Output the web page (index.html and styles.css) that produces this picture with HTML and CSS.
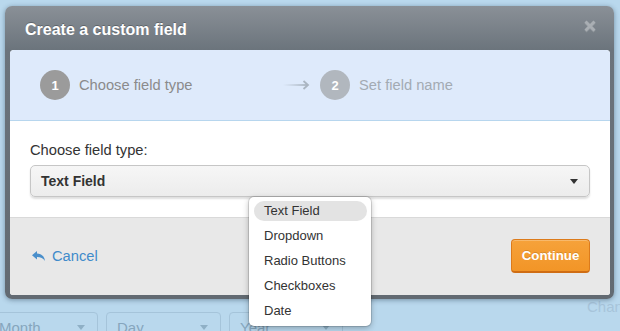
FILE: index.html
```html
<!DOCTYPE html>
<html>
<head>
<meta charset="utf-8">
<link rel="stylesheet" href="styles.css">
</head>
<body>
<div class="bg">
  <div class="bg-chan">Chan</div>
  <div class="bg-row">
    <div class="bg-sel bg-month"><span>Month</span><i class="bg-caret"></i></div>
    <div class="bg-sel bg-day"><span>Day</span><i class="bg-caret"></i></div>
    <div class="bg-sel bg-year"><span>Year</span><i class="bg-caret"></i></div>
  </div>
</div>

<div class="modal">
  <div class="modal-head">
    <h1 class="title">Create a custom field</h1>
    <svg class="close" width="12" height="12" viewBox="0 0 12 12"><path d="M1.5 1.5 L10.5 10.5 M10.5 1.5 L1.5 10.5" stroke="#a9aeb3" stroke-width="3"/></svg>
  </div>
  <div class="panel">
    <div class="steps">
      <div class="step step-first"><span class="num num-active">1</span><span class="step-label">Choose field type</span></div>
      <svg class="arrow" width="27" height="10" viewBox="0 0 27 10">
        <defs><linearGradient id="ag" x1="0" x2="1" y1="0" y2="0"><stop offset="0" stop-color="#b2bdc9" stop-opacity="0"/><stop offset="1" stop-color="#aab5c1"/></linearGradient></defs>
        <rect x="0" y="4" width="25" height="2" fill="url(#ag)"/>
        <path d="M20.5 1 L25 5 L20.5 9" fill="none" stroke="#aab5c1" stroke-width="1.8"/>
      </svg>
      <div class="step"><span class="num num-next">2</span><span class="step-label step-label-next">Set field name</span></div>
    </div>
    <div class="content">
      <label class="field-label">Choose field type:</label>
      <div class="select"><span>Text Field</span><svg class="caret" width="8" height="5" viewBox="0 0 8 5"><path d="M0 0 H8 L4 5 Z" fill="#333"/></svg></div>
    </div>
    <div class="foot">
      <a class="cancel"><svg class="reply" width="13" height="10" viewBox="0 0 13 10"><path d="M0 4.2 L5 0 L5 2.6 C9.5 2.8 12.3 5 13 10 C11.3 7.2 8.8 6 5 6 L5 8.6 Z" fill="#4a8fcb"/></svg>Cancel</a>
      <button class="btn">Continue</button>
    </div>
  </div>
</div>

<ul class="menu">
  <li class="item item-active">Text Field</li>
  <li class="item">Dropdown</li>
  <li class="item">Radio Buttons</li>
  <li class="item">Checkboxes</li>
  <li class="item">Date</li>
</ul>
</body>
</html>
```

FILE: styles.css
```css
* { box-sizing: border-box; }
html, body {
  margin: 0;
  padding: 0;
}
body {
  width: 620px;
  height: 331px;
  overflow: hidden;
  position: relative;
  background: #b9d8ed;
  font-family: "Liberation Sans", Arial, sans-serif;
}

/* background page */
.bg {
  display: flex;
  flex-direction: column;
  padding-top: 299px;
}
.bg-chan {
  padding-left: 587px;
  font-size: 15px;
  line-height: 16px;
  height: 13px;
  color: #a7c4da;
}
.bg-row {
  display: flex;
  gap: 8px;
  margin-left: -12px;
}
.bg-sel {
  height: 26px;
  border: 1px solid #a5c4da;
  border-radius: 4px;
  display: flex;
  align-items: center;
  justify-content: space-between;
  padding: 4px 12px 0 10px;
  color: #86a6bd;
  font-size: 15px;
}
.bg-month { width: 110px; }
.bg-day { width: 115px; }
.bg-year { width: 114px; }
.bg-caret {
  width: 0;
  height: 0;
  border-left: 4px solid transparent;
  border-right: 4px solid transparent;
  border-top: 5px solid #8fb0c6;
}

/* modal */
.modal {
  position: absolute;
  left: 5px;
  top: 6px;
  width: 609px;
  height: 293px;
  border-radius: 7px;
  padding: 0 4px 4px 5px;
  background: linear-gradient(#8a9097 0, #6b747c 44px, #626a72 100%);
  box-shadow: 0 1px 5px rgba(30, 50, 70, 0.45);
  display: flex;
  flex-direction: column;
}
.modal-head {
  height: 44px;
  display: flex;
  align-items: center;
  justify-content: space-between;
  padding: 3px 14px 0 15px;
}
.title {
  margin: 0;
  font-size: 16px;
  font-weight: bold;
  color: #fff;
  text-shadow: 0 -1px 0 rgba(0, 0, 0, 0.25);
}
.close {
  margin-bottom: 7px;
  filter: drop-shadow(0 1px 0 rgba(255,255,255,0.15));
}
.panel {
  flex: 1;
  background: #fff;
  border-radius: 4px 4px 3px 3px;
  overflow: hidden;
  display: flex;
  flex-direction: column;
}
.steps {
  height: 71px;
  background: #deeafb;
  border-bottom: 1px solid #b7d6ee;
  display: flex;
  align-items: center;
  padding-left: 30px;
}
.step {
  display: flex;
  align-items: center;
}
.step-first { width: 243px; }
.num {
  width: 30px;
  height: 30px;
  border-radius: 50%;
  display: flex;
  align-items: center;
  justify-content: center;
  color: #fff;
  font-weight: bold;
  font-size: 13px;
}
.num-active { background: #9b9b9b; }
.num-next { background: #b1b7be; }
.step-label {
  margin-left: 9px;
  font-size: 14.7px;
  color: #8b8b8b;
}
.step-label-next { color: #a3aab3; }
.arrow { margin-right: 10px; }

.content {
  height: 96px;
  padding: 20px;
}
.field-label {
  display: block;
  height: 18px;
  line-height: 18px;
  font-size: 14.7px;
  color: #333;
  margin-bottom: 6px;
}
.select {
  height: 32px;
  border: 1px solid #c6c6c6;
  border-radius: 5px;
  background: linear-gradient(#f6f6f6, #ececec);
  box-shadow: 0 2px 2px rgba(0, 0, 0, 0.13);
  display: flex;
  align-items: center;
  justify-content: space-between;
  padding: 0 11px 0 10px;
  font-size: 14px;
  font-weight: bold;
  color: #333;
}

.foot {
  flex: 1;
  background: #e8e8e8;
  border-top: 1px solid #d9d9d9;
  display: flex;
  align-items: center;
  justify-content: space-between;
  padding: 0 20px 2px 22px;
}
.cancel {
  display: flex;
  align-items: center;
  font-size: 14.7px;
  color: #3f8bcb;
}
.reply { margin-right: 7px; }
.btn {
  width: 79px;
  height: 34px;
  border: 1px solid #dc7b1b;
  border-bottom: 2px solid #cf6d14;
  border-radius: 4px;
  background: linear-gradient(#f6a23a, #f29527);
  box-shadow: inset 0 1px 0 rgba(255, 255, 255, 0.25);
  color: #fff;
  font-family: "Liberation Sans", Arial, sans-serif;
  font-weight: bold;
  font-size: 13.3px;
  text-shadow: 0 -1px 0 rgba(0, 0, 0, 0.15);
  padding: 0;
}

/* dropdown menu */
.menu {
  position: absolute;
  left: 249px;
  top: 197px;
  width: 122px;
  margin: 0;
  padding: 4px 0 0;
  list-style: none;
  background: #fff;
  border-radius: 5px;
  box-shadow: 0 0 0 1px rgba(0, 0, 0, 0.12), 0 2px 6px rgba(0, 0, 0, 0.28);
}
.item {
  height: 20px;
  line-height: 20px;
  margin: 0 4px 5px 5px;
  padding-left: 10px;
  border-radius: 10px;
  font-size: 13px;
  color: #333;
}
.item-active { background: #e3e3e3; }
```
